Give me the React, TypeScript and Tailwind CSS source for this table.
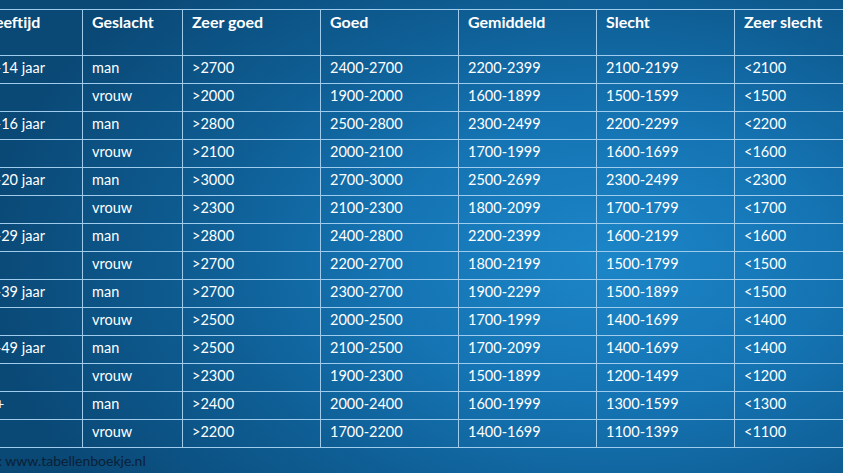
const headers = ['Leeftijd', 'Geslacht', 'Zeer goed', 'Goed', 'Gemiddeld', 'Slecht', 'Zeer slecht'];

const rows: string[][] = [
  ['13-14 jaar', 'man', '>2700', '2400-2700', '2200-2399', '2100-2199', '<2100'],
  ['', 'vrouw', '>2000', '1900-2000', '1600-1899', '1500-1599', '<1500'],
  ['15-16 jaar', 'man', '>2800', '2500-2800', '2300-2499', '2200-2299', '<2200'],
  ['', 'vrouw', '>2100', '2000-2100', '1700-1999', '1600-1699', '<1600'],
  ['17-20 jaar', 'man', '>3000', '2700-3000', '2500-2699', '2300-2499', '<2300'],
  ['', 'vrouw', '>2300', '2100-2300', '1800-2099', '1700-1799', '<1700'],
  ['20-29 jaar', 'man', '>2800', '2400-2800', '2200-2399', '1600-2199', '<1600'],
  ['', 'vrouw', '>2700', '2200-2700', '1800-2199', '1500-1799', '<1500'],
  ['30-39 jaar', 'man', '>2700', '2300-2700', '1900-2299', '1500-1899', '<1500'],
  ['', 'vrouw', '>2500', '2000-2500', '1700-1999', '1400-1699', '<1400'],
  ['40-49 jaar', 'man', '>2500', '2100-2500', '1700-2099', '1400-1699', '<1400'],
  ['', 'vrouw', '>2300', '1900-2300', '1500-1899', '1200-1499', '<1200'],
  ['50+', 'man', '>2400', '2000-2400', '1600-1999', '1300-1599', '<1300'],
  ['', 'vrouw', '>2200', '1700-2200', '1400-1699', '1100-1399', '<1100'],
];

const widths = ['w-[105px]', 'w-[100px]', 'w-[138px]', 'w-[138px]', 'w-[138px]', 'w-[138px]', 'w-[138px]'];

export default function App() {
  return (
    <div
      className="w-[843px] h-[473px] overflow-hidden flex flex-col pt-[9px] bg-[radial-gradient(ellipse_75%_85%_at_72%_55%,#1c86c8_0%,#1574b3_35%,#0e5d93_65%,#0a4875_100%)] text-white text-[14px]"
      style={{ fontFamily: 'Lato, "Open Sans", sans-serif' }}
    >
      <table className="ml-[-23px] border-collapse table-fixed w-[895px] shrink-0">
        <thead>
          <tr className="h-[46px]">
            {headers.map((h, i) => (
              <th
                key={h}
                className={`${widths[i]} border border-[#9fcbec] align-top text-left font-bold text-[16px] px-[9px] pt-[1px] leading-[22px] whitespace-nowrap`}
              >
                {h}
              </th>
            ))}
          </tr>
        </thead>
        <tbody>
          {rows.map((r, ri) => (
            <tr key={ri} className="h-[28px]">
              {r.map((c, ci) => (
                <td
                  key={ci}
                  className={`border border-[#9fcbec] align-top px-[9px] pt-[1px] leading-[22px] whitespace-nowrap text-[14.5px] ${
                    ci === 0 ? 'indent-[-8px]' : ''
                  }`}
                >
                  {c}
                </td>
              ))}
            </tr>
          ))}
        </tbody>
      </table>
      <div className="ml-[-31px] mt-[3px] text-[#0b1f36] text-[14px] leading-[20px]">Bron: www.tabellenboekje.nl</div>
    </div>
  );
}
